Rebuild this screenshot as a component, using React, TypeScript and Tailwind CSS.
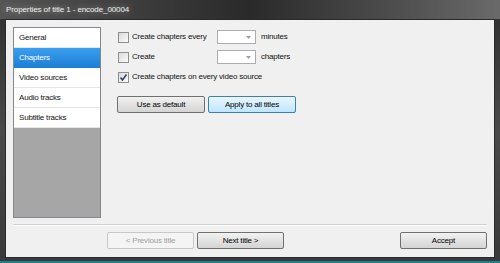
import React from "react";

const font = { fontFamily: '"Liberation Sans", Arial, sans-serif' };

function Check({ checked }: { checked?: boolean }) {
  return (
    <span className="flex h-[11px] w-[11px] items-center justify-center border border-[#8f8f8f] bg-gradient-to-br from-[#dcdcdc] to-[#fafafa]">
      {checked && (
        <svg width="9" height="9" viewBox="0 0 9 9">
          <path d="M1.5 4.5 L3.5 7 L7.5 1.5" fill="none" stroke="#2a3a6a" strokeWidth="1.4" />
        </svg>
      )}
    </span>
  );
}

function Combo() {
  return (
    <div className="flex h-[14px] w-[39px] items-center justify-end border border-[#abadb3] bg-white pr-[4px]">
      <svg width="5" height="3" viewBox="0 0 5 3">
        <path d="M0 0 L5 0 L2.5 3 Z" fill="#a0a0a0" />
      </svg>
    </div>
  );
}

function Btn({ label, w, focus, disabled }: { label: string; w: string; focus?: boolean; disabled?: boolean }) {
  return (
    <button
      className={
        "flex h-[17px] items-center justify-center whitespace-nowrap rounded-[2px] border text-[8px] leading-none tracking-[-0.2px] " +
        w +
        (disabled
          ? " border-[#c8c8c8] bg-[#f4f4f4] text-[#a0a0a0]"
          : focus
          ? " border-[#3c7fb1] bg-gradient-to-b from-[#eaf6fd] to-[#bee6fd] text-black"
          : " border-[#707070] bg-gradient-to-b from-[#f2f2f2] to-[#d4d4d4] text-black")
      }
    >
      {label}
    </button>
  );
}

export default function App() {
  const items = ["General", "Chapters", "Video sources", "Audio tracks", "Subtitle tracks"];
  return (
    <div className="h-[263px] w-[500px] overflow-hidden bg-[#1f7f8a]" style={font}>
      <div className="flex h-[261px] w-[500px] flex-col bg-gradient-to-b from-[#2e2e2e] via-[#4a4a4a] to-[#3a3a3a]">
        <div className="flex h-[19px] items-center bg-gradient-to-r from-[#555] via-[#2a2a2a] to-[#6a6a6a] pl-[6px] text-[8px] tracking-[-0.1px]">
          <span className="text-[#f0f0f0] [text-shadow:0_0_6px_#fff8]">Properties of title 1 - encode_00004</span>
        </div>
        <div className="mx-[5px] mb-[3px] flex flex-1 flex-col border border-[#2a2a2a] bg-[#f0f0f0]">
          <div className="flex flex-1 px-[7px] pt-[7px]">
            <div className="flex h-[191px] w-[88px] flex-col border border-[#828790] bg-[#a6a6a6]">
              {items.map((it, i) => (
                <div
                  key={it}
                  className={
                    "flex h-[20px] items-center border-b pl-[5px] text-[8px] tracking-[-0.2px] " +
                    (i === 1
                      ? "border-[#1d7fd6] bg-gradient-to-b from-[#3a9ff0] to-[#1d7fd6] text-white"
                      : "border-[#e6e6e6] bg-white text-[#111]")
                  }
                >
                  {it}
                </div>
              ))}
            </div>
            <div className="flex flex-col pl-[17px] pt-[3px] text-[8px] tracking-[-0.2px] text-[#111]">
              <div className="flex h-[14px] items-center">
                <Check />
                <span className="ml-[3px] w-[85px] whitespace-nowrap">Create chapters every</span>
                <Combo />
                <span className="ml-[5px]">minutes</span>
              </div>
              <div className="mt-[6px] flex h-[14px] items-center">
                <Check />
                <span className="ml-[3px] w-[85px]">Create</span>
                <Combo />
                <span className="ml-[5px]">chapters</span>
              </div>
              <div className="mt-[6px] flex h-[14px] items-center">
                <Check checked />
                <span className="ml-[3px] whitespace-nowrap">Create chapters on every video source</span>
              </div>
              <div className="ml-[-1px] mt-[12px] flex gap-[3px]">
                <Btn label="Use as default" w="w-[88px]" />
                <Btn label="Apply to all titles" w="w-[88px]" focus />
              </div>
            </div>
          </div>
          <div className="mx-[7px] h-[2px] border-b border-t border-[#d0d0d0] border-b-white" />
          <div className="flex items-center px-[7px] pb-[8px] pt-[6px]">
            <div className="w-[94px]" />
            <Btn label="< Previous title" w="w-[87px]" disabled />
            <div className="w-[3px]" />
            <Btn label="Next title >" w="w-[87px]" />
            <div className="flex-1" />
            <Btn label="Accept" w="w-[87px]" />
          </div>
        </div>
      </div>
    </div>
  );
}
